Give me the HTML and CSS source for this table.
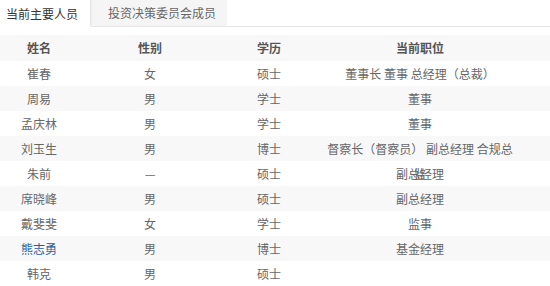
FILE: index.html
```html
<!DOCTYPE html>
<html lang="zh">
<head>
<meta charset="utf-8">
<link rel="stylesheet" href="styles.css">
</head>
<body>
<div class="tabs">
  <div class="tab active">当前主要人员</div>
  <div class="tab">投资决策委员会成员</div>
  <div class="tab-fill"></div>
</div>
<div class="table">
  <div class="row head"><div>姓名</div><div>性别</div><div>学历</div><div>当前职位</div></div>
  <div class="row"><div>崔春</div><div>女</div><div>硕士</div><div>董事长 董事 总经理（总裁）</div></div>
  <div class="row alt"><div>周易</div><div>男</div><div>学士</div><div>董事</div></div>
  <div class="row"><div>孟庆林</div><div>男</div><div>学士</div><div>董事</div></div>
  <div class="row alt"><div>刘玉生</div><div>男</div><div>博士</div><div class="wrap">督察长（督察员） 副总经理 合规总监</div></div>
  <div class="row"><div>朱前</div><div>—</div><div>硕士</div><div>副总经理</div></div>
  <div class="row alt"><div>席晓峰</div><div>男</div><div>硕士</div><div>副总经理</div></div>
  <div class="row"><div>戴斐斐</div><div>女</div><div>学士</div><div>监事</div></div>
  <div class="row alt"><div><a class="link" href="#">熊志勇</a></div><div>男</div><div>博士</div><div>基金经理</div></div>
  <div class="row"><div>韩克</div><div>男</div><div>硕士</div><div></div></div>
</div>
</body>
</html>
```

FILE: styles.css
```css
html, body {
  margin: 0;
  padding: 0;
  background: #fff;
}
body {
  font-family: "Noto Sans CJK SC", "Microsoft YaHei", sans-serif;
  font-size: 12px;
  color: #666;
  width: 550px;
  overflow: hidden;
}
.tabs {
  display: flex;
  height: 27px;
}
.tab {
  box-sizing: border-box;
  height: 27px;
  line-height: 26px;
  color: #666;
  background: #f5f5f5;
  border-bottom: 1px solid #e6e6e6;
  border-left: 1px solid #ececec;
  padding: 0 0 0 16px;
  width: 136px;
  white-space: nowrap;
}
.tab.active {
  background: #fff;
  color: #333;
  border-bottom: 1px solid #fff;
  border-left: none;
  border-right: 1px solid #e6e6e6;
  padding: 0 0 0 6px;
  width: 91px;
  line-height: 27px;
}
.tab-fill {
  flex: 1;
  box-sizing: border-box;
  height: 27px;
  border-bottom: 1px solid #e6e6e6;
}
.table {
  margin-top: 8px;
}
.row {
  display: grid;
  grid-template-columns: 78px 144px 94px 198px 1fr;
  height: 25px;
  line-height: 25px;
}
.row > div {
  text-align: center;
  white-space: normal;
  overflow: visible;
}
.row > div:nth-child(4) {
  box-sizing: border-box;
  padding-left: 10px;
}
.row.head {
  height: 26px;
  line-height: 26px;
  background: #f8f8f8;
  font-weight: bold;
  color: #555;
}
.row.alt {
  background: #f8f8f8;
}
.link {
  color: #1f5f9f;
  text-decoration: none;
}
```
